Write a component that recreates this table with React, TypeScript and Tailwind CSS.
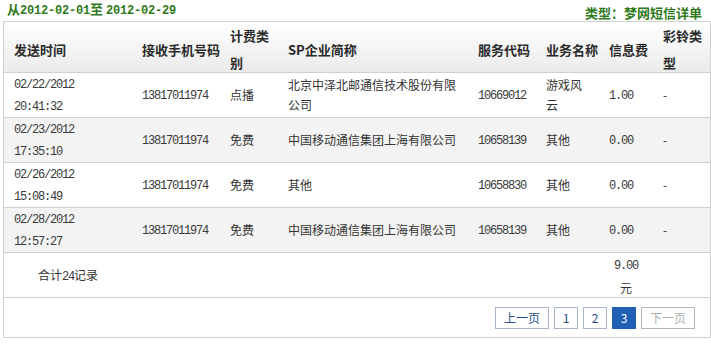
const COLS = 'grid grid-cols-[138px_88px_58px_190px_68px_63px_54px_1fr]'

const rows = [
  { date: '02/22/2012', time: '20:41:32', phone: '13817011974', fee: '点播', sp: '北京中泽北邮通信技术股份有限公司', code: '10669012', biz: '游戏风云', money: '1.00' },
  { date: '02/23/2012', time: '17:35:10', phone: '13817011974', fee: '免费', sp: '中国移动通信集团上海有限公司', code: '10658139', biz: '其他', money: '0.00' },
  { date: '02/26/2012', time: '15:08:49', phone: '13817011974', fee: '免费', sp: '其他', code: '10658830', biz: '其他', money: '0.00' },
  { date: '02/28/2012', time: '12:57:27', phone: '13817011974', fee: '免费', sp: '中国移动通信集团上海有限公司', code: '10658139', biz: '其他', money: '0.00' },
]

function Num({ children }: { children: React.ReactNode }) {
  return <span className="font-['Liberation_Mono',monospace] text-[12px] tracking-[-1.2px] text-[#3a3a3a]">{children}</span>
}

function PageBtn({ label, active, disabled }: { label: string; active?: boolean; disabled?: boolean }) {
  const cls = active
    ? 'bg-[#1f5fb4] border-[#1f5fb4] text-white'
    : disabled
      ? 'bg-white border-[#b4b4b4] text-[#b0b0b0]'
      : 'bg-white border-[#a9b6ca] text-[#254f8c]'
  const w = label.length > 1 ? 'w-[54px]' : 'w-[24px]'
  return (
    <span className={`h-[22px] ${w} border flex items-center justify-center text-[12px] ${cls}`}>{label}</span>
  )
}

export default function App() {
  return (
    <div className="w-[711px] h-[350px] bg-white font-['Noto_Sans_CJK_SC',sans-serif] text-[12px] text-[#333]">
      <div className="flex justify-between h-[21px] text-[13px] font-bold text-[#2f7a1c]">
        <span className="pl-[7px] leading-[18px]">
          从<span className="font-['Liberation_Mono',monospace] text-[12px] tracking-[-0.2px]">2012-02-01</span>至{' '}
          <span className="font-['Liberation_Mono',monospace] text-[12px] tracking-[-0.2px]">2012-02-29</span>
        </span>
        <span className="pr-[9px] pt-[4px] leading-[18px]">类型：梦网短信详单</span>
      </div>

      <div className="mx-[3px] w-[708px] border border-[#d0d0d0]">
        <div className={`${COLS} items-center h-[51px] border-b border-[#d0d0d0] bg-gradient-to-b from-white to-[#ebebeb] font-bold text-[13px] text-[#2a2a2a] leading-[27px]`}>
          <div className="pl-[10px]">发送时间</div>
          <div>接收手机号码</div>
          <div className="w-[40px]">计费类别</div>
          <div>SP企业简称</div>
          <div>服务代码</div>
          <div>业务名称</div>
          <div>信息费</div>
          <div className="w-[40px]">彩铃类型</div>
        </div>

        {rows.map((r, i) => (
          <div
            key={i}
            className={`${COLS} items-center h-[45px] border-b border-[#d0d0d0] leading-[20px] ${i % 2 ? 'bg-[#f3f3f3]' : 'bg-white'}`}
          >
            <div className="pl-[10px]">
              <Num>{r.date}</Num>
              <br />
              <Num>{r.time}</Num>
            </div>
            <div><Num>{r.phone}</Num></div>
            <div>{r.fee}</div>
            <div className="w-[172px]">{r.sp}</div>
            <div><Num>{r.code}</Num></div>
            <div className="w-[40px]">{r.biz}</div>
            <div><Num>{r.money}</Num></div>
            <div>-</div>
          </div>
        ))}

        <div className={`${COLS} items-center h-[45px] border-b border-[#d0d0d0] leading-[21px]`}>
          <div className="pl-[34px] col-span-6">
            合计<Num>24</Num>记录
          </div>
          <div className="w-[34px] text-center">
            <Num>9.00</Num>
            <br />
            元
          </div>
          <div />
        </div>

        <div className="flex items-center justify-end gap-[5px] h-[39px] pr-[15px]">
          <PageBtn label="上一页" />
          <PageBtn label="1" />
          <PageBtn label="2" />
          <PageBtn label="3" active />
          <PageBtn label="下一页" disabled />
        </div>
      </div>
    </div>
  )
}
